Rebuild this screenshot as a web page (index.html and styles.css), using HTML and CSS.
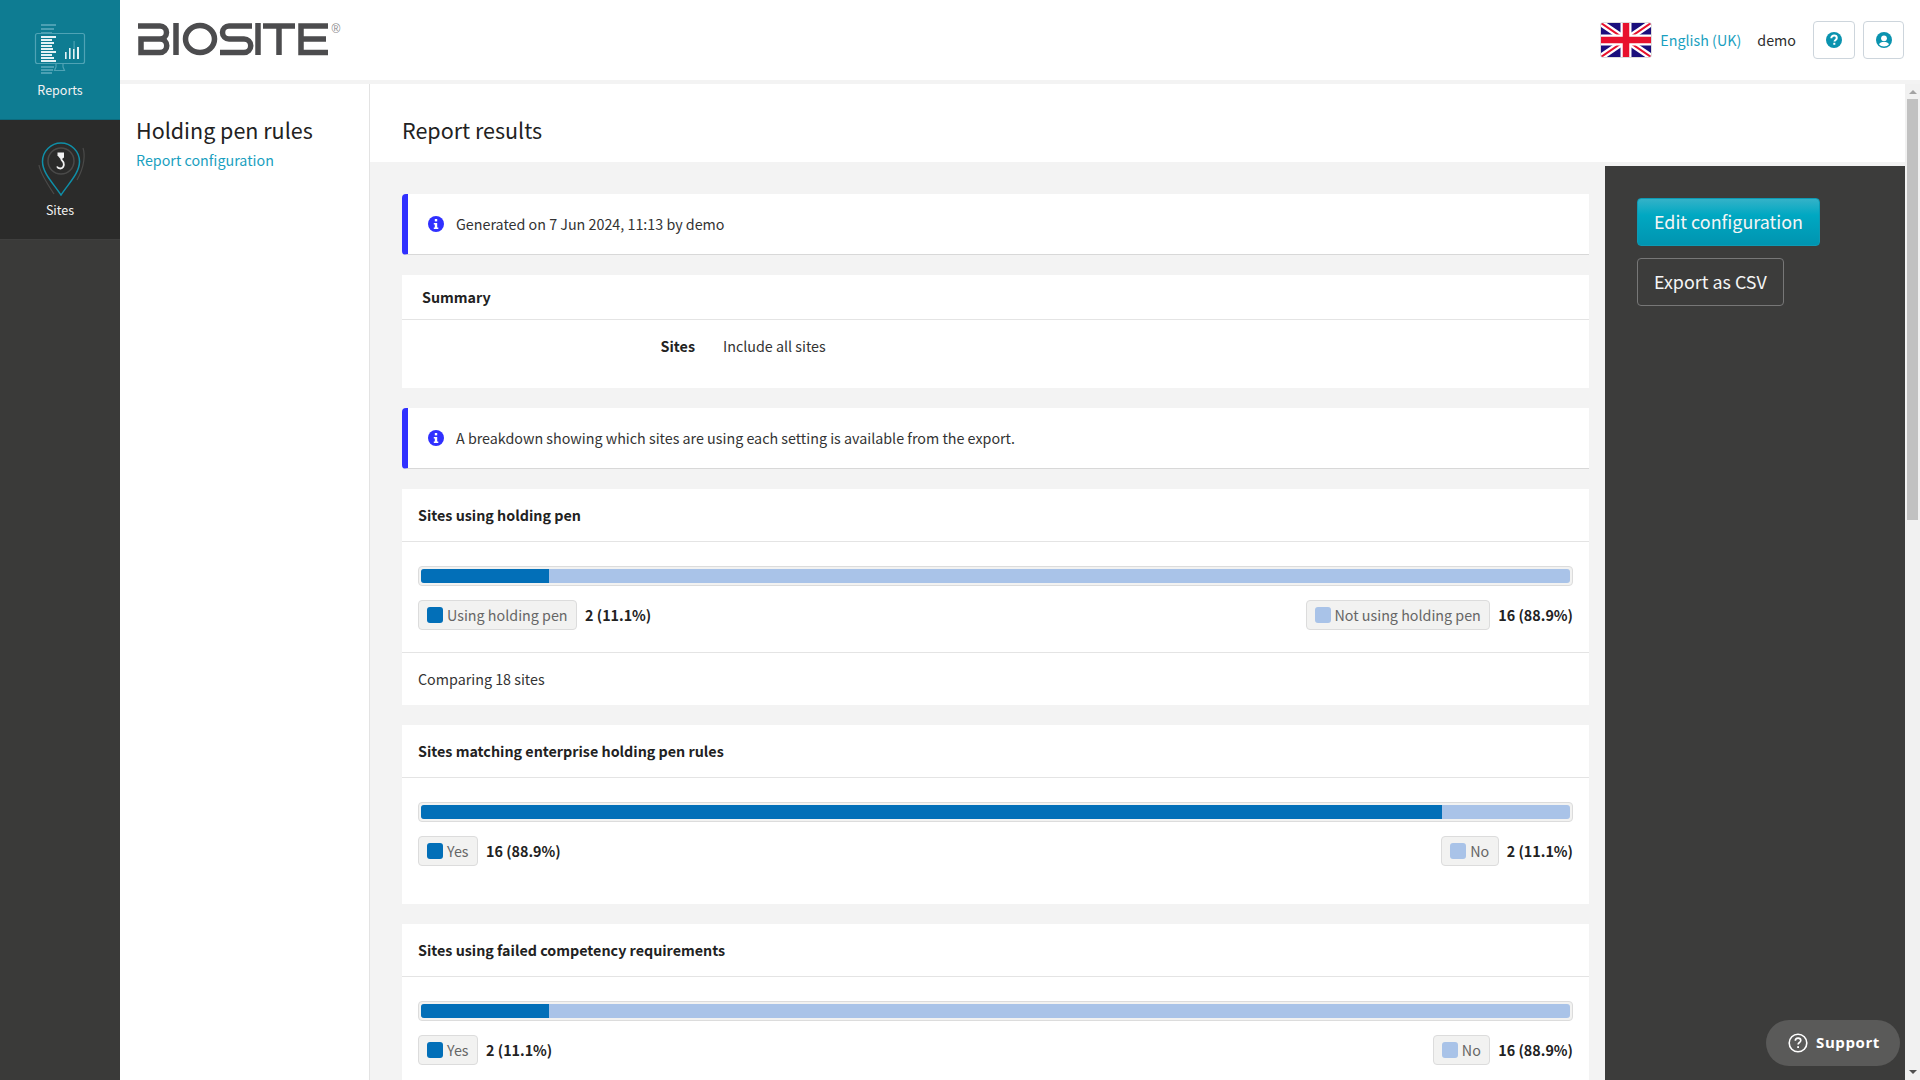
FILE: index.html
```html
<!DOCTYPE html>
<html lang="en">
<head>
<meta charset="utf-8">
<title>Holding pen rules</title>
<link rel="stylesheet" href="styles.css">
</head>
<body>
<nav class="rail">
  <a class="rail-item rail-item-active">
    <svg class="rail-icon" viewBox="32 22 56 56" width="56" height="56">
      <g fill="none" stroke="#4fa3b5" stroke-width="1.2">
        <rect x="35.5" y="33.5" width="49" height="30" rx="2"/>
        <path d="M56 64v3l-1.500 3.500h10L63 67v-3"/>
      </g>
      <g fill="#4ba0b3">
        <rect x="41" y="24" width="15" height="2"/><rect x="41" y="28" width="13" height="2"/><rect x="41" y="32" width="11" height="1.500"/>
        <rect x="41" y="66" width="13" height="2"/><rect x="41" y="69" width="12" height="2"/><rect x="41" y="72" width="11" height="2"/>
        <rect x="73.500" y="41" width="1.200" height="8"/>
      </g>
      <g fill="#e4f2f5">
        <rect x="41" y="36" width="15" height="2"/><rect x="41" y="39" width="11" height="2"/><rect x="41" y="42" width="13" height="2"/>
        <rect x="41" y="45" width="11" height="2"/><rect x="41" y="48" width="12" height="2"/><rect x="41" y="51" width="15" height="2"/>
        <rect x="41" y="54" width="11" height="2"/><rect x="41" y="57" width="13" height="2"/><rect x="41" y="60" width="15" height="2"/>
        <rect x="65" y="52" width="1.600" height="7"/><rect x="69" y="48" width="1.600" height="11"/><rect x="73" y="49" width="1.600" height="10"/><rect x="77" y="47" width="2" height="12"/>
      </g>
    </svg>
    <span class="rail-label">Reports</span>
  </a>
  <a class="rail-item">
    <svg class="rail-icon" viewBox="32 138 56 60" width="56" height="60">
      <path d="M61 195C53 183 42.500 173 42.500 161.500a18.500 18.500 0 0 1 37 0C79.500 173 69 183 61 195z" fill="none" stroke="#0f8fa8" stroke-width="1.500"/>
      <circle cx="61" cy="161" r="13" fill="none" stroke="#4a4a49" stroke-width="1.500"/>
      <path d="M39 165c1 7 5 14 15 29M83 148c2 6 2 18-6 32" fill="none" stroke="#4a4a49" stroke-width="1.200"/>
      <path d="M57.500 152.500h6.500v5l-2 1.500h-1.500l-3-3.500z" fill="#f2f2f2"/>
      <path d="M61 159l2.500 3.500c1.200 3.500-.8 6-3 6s-3-.8-3.500-2" fill="none" stroke="#f2f2f2" stroke-width="1.800"/>
    </svg>
    <span class="rail-label">Sites</span>
  </a>
</nav>

<div class="app">
  <header class="topbar">
    <svg class="logo" viewBox="136 21 206 38" width="206" height="38" role="img" aria-label="Biosite logo">
      <g fill="none" stroke="#4c4c4e" stroke-width="5.500">
        <path d="M138 26H160a6.500 6.500 0 0 1 0 13H141V52.500H160a6.700 6.700 0 0 0 0-13.500"/>
        <path d="M176 23V55"/>
        <ellipse cx="200" cy="39" rx="14.500" ry="13.500"/>
        <path d="M252 26H229a6.500 6.500 0 0 0 0 13h15a6.750 6.750 0 0 1 0 13.500H220"/>
        <path d="M258 23V55"/>
        <path d="M263 26H295M279 26V55"/>
        <path d="M328 26H301V52.500H328M301 39H326"/>
      </g>
      <text class="logo-mark" x="336" y="32.500">®</text>
    </svg>
    <div class="topbar-tools">
      <svg class="flag" viewBox="0 0 50 34" width="52" height="36">
        <rect width="50" height="34" fill="#1b0f7d"/>
        <path d="M0 0L50 34M50 0L0 34" stroke="#fff" stroke-width="6.500"/>
        <path d="M0 0L50 34M50 0L0 34" stroke="#e8112d" stroke-width="2"/>
        <path d="M25 0V34M0 17H50" stroke="#fff" stroke-width="11"/>
        <path d="M25 0V34M0 17H50" stroke="#e8112d" stroke-width="6.500"/>
      </svg>
      <a class="lang">English (UK)</a>
      <span class="username">demo</span>
      <div class="tool-buttons">
        <button class="tool-btn tool-btn-help">
          <svg viewBox="0 0 16 16" width="16" height="16"><circle cx="8" cy="8" r="8" fill="#0a93af"/><path d="M5.300 6.200c0-1.700 1.300-2.700 2.800-2.700s2.700 1 2.700 2.400c0 2-2.300 2-2.300 3.700" fill="none" stroke="#fff" stroke-width="2"/><rect x="7.300" y="10.800" width="2" height="2" fill="#fff"/></svg>
        </button>
        <button class="tool-btn">
          <svg viewBox="0 0 16 16" width="16" height="16"><circle cx="8" cy="8" r="8" fill="#0a93af"/><circle cx="8" cy="6.300" r="2.900" fill="#fff"/><path d="M3 12.300c.8-1.700 2.500-2.300 5-2.300s4.200.6 5 2.300C11.800 13.800 10 14.500 8 14.500s-3.800-.7-5-2.200z" fill="#fff"/></svg>
        </button>
      </div>
    </div>
  </header>

  <div class="workspace">
    <aside class="subnav">
      <h1 class="page-title">Holding pen rules</h1>
      <a class="subnav-link">Report configuration</a>
    </aside>

    <main class="main">
      <div class="title-bar"><h2 class="page-title">Report results</h2></div>
      <div class="main-body">
        <section class="content">
          <div class="alert">
            <svg class="info" viewBox="0 0 16 16" width="16" height="16"><circle cx="8" cy="8" r="8" fill="#3030ff"/><rect x="6.800" y="3" width="2.400" height="2.400" fill="#fff"/><path d="M5.800 7h3.400v4.500h1.100V13H5.800v-1.500h1V8.500h-1z" fill="#fff"/></svg>
            <span>Generated on 7 Jun 2024, 11:13 by demo</span>
          </div>

          <div class="card">
            <div class="summary-head">Summary</div>
            <div class="summary-body">
              <span class="summary-key">Sites</span>
              <span>Include all sites</span>
            </div>
          </div>

          <div class="alert">
            <svg class="info" viewBox="0 0 16 16" width="16" height="16"><circle cx="8" cy="8" r="8" fill="#3030ff"/><rect x="6.800" y="3" width="2.400" height="2.400" fill="#fff"/><path d="M5.800 7h3.400v4.500h1.100V13H5.800v-1.500h1V8.500h-1z" fill="#fff"/></svg>
            <span>A breakdown showing which sites are using each setting is available from the export.</span>
          </div>

          <div class="card">
            <div class="card-head">Sites using holding pen</div>
            <div class="chart">
              <div class="track"><div class="bar"><div class="fill" style="width:11.1%"></div></div></div>
              <div class="legend">
                <div class="legend-side"><span class="pill"><i class="swatch swatch-dark"></i>Using holding pen</span><b class="value">2 (11.1%)</b></div>
                <div class="legend-side"><span class="pill"><i class="swatch swatch-light"></i>Not using holding pen</span><b class="value">16 (88.9%)</b></div>
              </div>
            </div>
            <div class="card-foot">Comparing 18 sites</div>
          </div>

          <div class="card">
            <div class="card-head">Sites matching enterprise holding pen rules</div>
            <div class="chart chart-open">
              <div class="track"><div class="bar"><div class="fill" style="width:88.9%"></div></div></div>
              <div class="legend">
                <div class="legend-side"><span class="pill"><i class="swatch swatch-dark"></i>Yes</span><b class="value">16 (88.9%)</b></div>
                <div class="legend-side"><span class="pill"><i class="swatch swatch-light"></i>No</span><b class="value">2 (11.1%)</b></div>
              </div>
            </div>
          </div>

          <div class="card">
            <div class="card-head">Sites using failed competency requirements</div>
            <div class="chart chart-open">
              <div class="track"><div class="bar"><div class="fill" style="width:11.1%"></div></div></div>
              <div class="legend">
                <div class="legend-side"><span class="pill"><i class="swatch swatch-dark"></i>Yes</span><b class="value">2 (11.1%)</b></div>
                <div class="legend-side"><span class="pill"><i class="swatch swatch-light"></i>No</span><b class="value">16 (88.9%)</b></div>
              </div>
            </div>
          </div>
        </section>

        <aside class="actions">
          <button class="btn btn-primary">Edit configuration</button>
          <button class="btn btn-ghost">Export as CSV</button>
        </aside>
      </div>
    </main>

    <div class="scrollbar">
      <i class="arrow arrow-up"></i>
      <div class="thumb"></div>
      <i class="arrow arrow-down"></i>
    </div>
  </div>
</div>

<button class="support">
  <svg viewBox="0 0 20 20" width="20" height="20"><circle cx="10" cy="10" r="8.800" fill="none" stroke="#fff" stroke-width="1.600"/><path d="M7.300 7.800c0-1.700 1.200-2.700 2.800-2.700s2.700 1 2.700 2.400c0 2-2.700 2-2.700 4" fill="none" stroke="#fff" stroke-width="1.600"/><rect x="9.200" y="13.200" width="1.800" height="1.800" fill="#fff"/></svg>
  <span class="support-label">Support</span>
</button>
</body>
</html>
```

FILE: styles.css
```css
* { box-sizing: border-box; }

html, body { height: 100%; }

body {
  margin: 0;
  display: flex;
  height: 1080px;
  overflow: hidden;
  background: #3c3c3b;
  color: #333;
  font-family: "Noto Sans CJK SC", "Noto Sans", sans-serif;
  font-size: 14.3px;
  line-height: 24px;
}

.rail {
  width: 120px;
  flex: none;
  background: #3a3a39;
  display: flex;
  flex-direction: column;
}

.rail-item {
  height: 120px;
  background: #2b2b2a;
  border-bottom: 1px solid #3f3f3e;
  color: #f2f2f2;
  display: flex;
  flex-direction: column;
  align-items: center;
  position: relative;
}

.rail-item-active {
  background: #0e7c92;
  border-bottom-color: #0c6a7d;
}

.rail-icon {
  position: absolute;
  top: 22px;
  left: 32px;
}

.rail-item:not(.rail-item-active) .rail-icon { top: 18px; }

.rail-label {
  margin-top: 78px;
  font-size: 12.5px;
  line-height: 24px;
}

.app {
  flex: 1;
  min-width: 0;
  display: flex;
  flex-direction: column;
}

.topbar {
  height: 84px;
  flex: none;
  background: #fff;
  border-bottom: 4px solid #f3f3f3;
  display: flex;
  align-items: center;
  justify-content: space-between;
  padding: 0 16px;
}

.logo { display: block; }

.logo-mark {
  fill: #8a8a8c;
  font-family: "Liberation Sans", sans-serif;
  font-size: 12px;
  text-anchor: middle;
}

.topbar-tools {
  display: flex;
  align-items: center;
}

.flag {
  border: 1px solid #ddd;
  border-radius: 3px;
  margin-right: 8px;
}

.lang { color: #1a9fc0; }

.username {
  margin-left: 16px;
  color: #2d2d2d;
}

.tool-buttons {
  display: flex;
  gap: 8px;
  margin-left: 17px;
}

.tool-btn {
  width: 41px;
  height: 38px;
  padding: 0;
  background: #fff;
  border: 1px solid #cdd5dc;
  border-radius: 4px;
  display: flex;
  align-items: center;
  justify-content: center;
}

.tool-btn-help { width: 42px; }

.workspace {
  flex: 1;
  min-height: 0;
  display: flex;
  background: #fff;
}

.subnav {
  width: 250px;
  flex: none;
  background: #fff;
  border-right: 1px solid #e3e3e3;
  padding: 29px 16px 0;
}

.page-title {
  margin: 0;
  font-size: 21.5px;
  line-height: 34px;
  font-weight: 400;
  color: #222;
}

.subnav-link {
  display: block;
  color: #1a9fc0;
  line-height: 25px;
}

.main {
  flex: 1;
  min-width: 0;
  display: flex;
  flex-direction: column;
  background: #f3f3f3;
}

.title-bar {
  height: 78px;
  flex: none;
  background: #fff;
  padding: 29px 0 0 32px;
}

.main-body {
  flex: 1;
  min-height: 0;
  display: flex;
  overflow: hidden;
}

.content {
  width: 1235px;
  flex: none;
  padding: 32px 16px 0 32px;
  display: flex;
  flex-direction: column;
  gap: 20px;
}

.alert {
  height: 61px;
  flex: none;
  background: #fff;
  border-left: 6px solid #3030ff;
  border-bottom: 1px solid #d8d8d8;
  border-radius: 4px 0 0 4px;
  padding-left: 20px;
  display: flex;
  align-items: center;
  gap: 12px;
}

.info { flex: none; }

.card {
  flex: none;
  background: #fff;
}

.summary-head {
  height: 45px;
  padding: 10px 20px 0;
  font-weight: 700;
  color: #222;
  border-bottom: 1px solid #e4e4e4;
}

.summary-body {
  height: 68px;
  padding-top: 14px;
  display: grid;
  grid-template-columns: 293px auto;
  column-gap: 28px;
}

.summary-key {
  text-align: right;
  font-weight: 700;
  color: #222;
}

.card-head {
  height: 53px;
  padding: 14px 16px 0;
  font-weight: 700;
  color: #222;
  border-bottom: 1px solid #e4e4e4;
}

.chart { padding: 24px 16px 22px; }

.chart-open { padding-bottom: 38px; }

.track {
  height: 20px;
  padding: 2px;
  background: #f2f2f1;
  border: 1px solid #dcdcdc;
  border-radius: 4px;
}

.bar {
  height: 14px;
  background: #a9c3e8;
  border-radius: 3px;
  overflow: hidden;
}

.fill {
  height: 14px;
  background: #026fb8;
}

.legend {
  margin-top: 14px;
  display: flex;
  justify-content: space-between;
}

.legend-side {
  display: flex;
  align-items: center;
  gap: 8px;
}

.pill {
  height: 30px;
  background: #f2f2f1;
  border: 1px solid #dcdcdc;
  border-radius: 4px;
  padding: 0 8.500px 0 8px;
  color: #666;
  display: flex;
  align-items: center;
  gap: 4px;
}

.swatch {
  width: 16px;
  height: 16px;
  border-radius: 3px;
}

.swatch-dark { background: #026fb8; }

.swatch-light { background: #a9c3e8; }

.value {
  font-weight: 700;
  color: #222;
}

.card-foot {
  height: 53px;
  padding: 14px 16px 0;
  border-top: 1px solid #e4e4e4;
}

.actions {
  flex: 1;
  margin-top: 4px;
  background: #3c3c3b;
  padding: 32px 32px 0;
  display: flex;
  flex-direction: column;
  align-items: flex-start;
  gap: 12px;
}

.btn {
  height: 48px;
  padding: 0 16px 2px;
  border-radius: 4px;
  color: #f5f5f5;
  font-family: inherit;
  font-size: 17.9px;
  line-height: 28px;
}

.btn-primary {
  border: 1px solid #0d9ab4;
  background: linear-gradient(#34b2c8 0, #00a8c2 35%, #0094b0 100%);
}

.btn-ghost {
  border: 1px solid #777;
  background: transparent;
}

.scrollbar {
  width: 15px;
  flex: none;
  background: #f1f1f1;
  display: flex;
  flex-direction: column;
  align-items: center;
  padding-top: 6px;
}

.thumb {
  width: 11px;
  height: 421px;
  margin-top: 5px;
  margin-bottom: auto;
  background: #c1c1c1;
}

.arrow {
  width: 0;
  height: 0;
  border-left: 4px solid transparent;
  border-right: 4px solid transparent;
}

.arrow-up { border-bottom: 4px solid #a3a3a3; }

.arrow-down {
  border-top: 4px solid #505050;
  margin-bottom: 6px;
}

.support {
  position: absolute;
  left: 1766px;
  top: 1020px;
  width: 134px;
  height: 46px;
  padding: 0 0 0 2px;
  border: 0;
  border-radius: 23px;
  background: #5a5a59;
  color: #fff;
  font-family: "Open Sans", sans-serif;
  font-size: 15px;
  font-weight: 700;
  letter-spacing: 0.6px;
  display: flex;
  align-items: center;
  justify-content: center;
  gap: 8px;
}

.support-label { margin-top: -2px; }
```
